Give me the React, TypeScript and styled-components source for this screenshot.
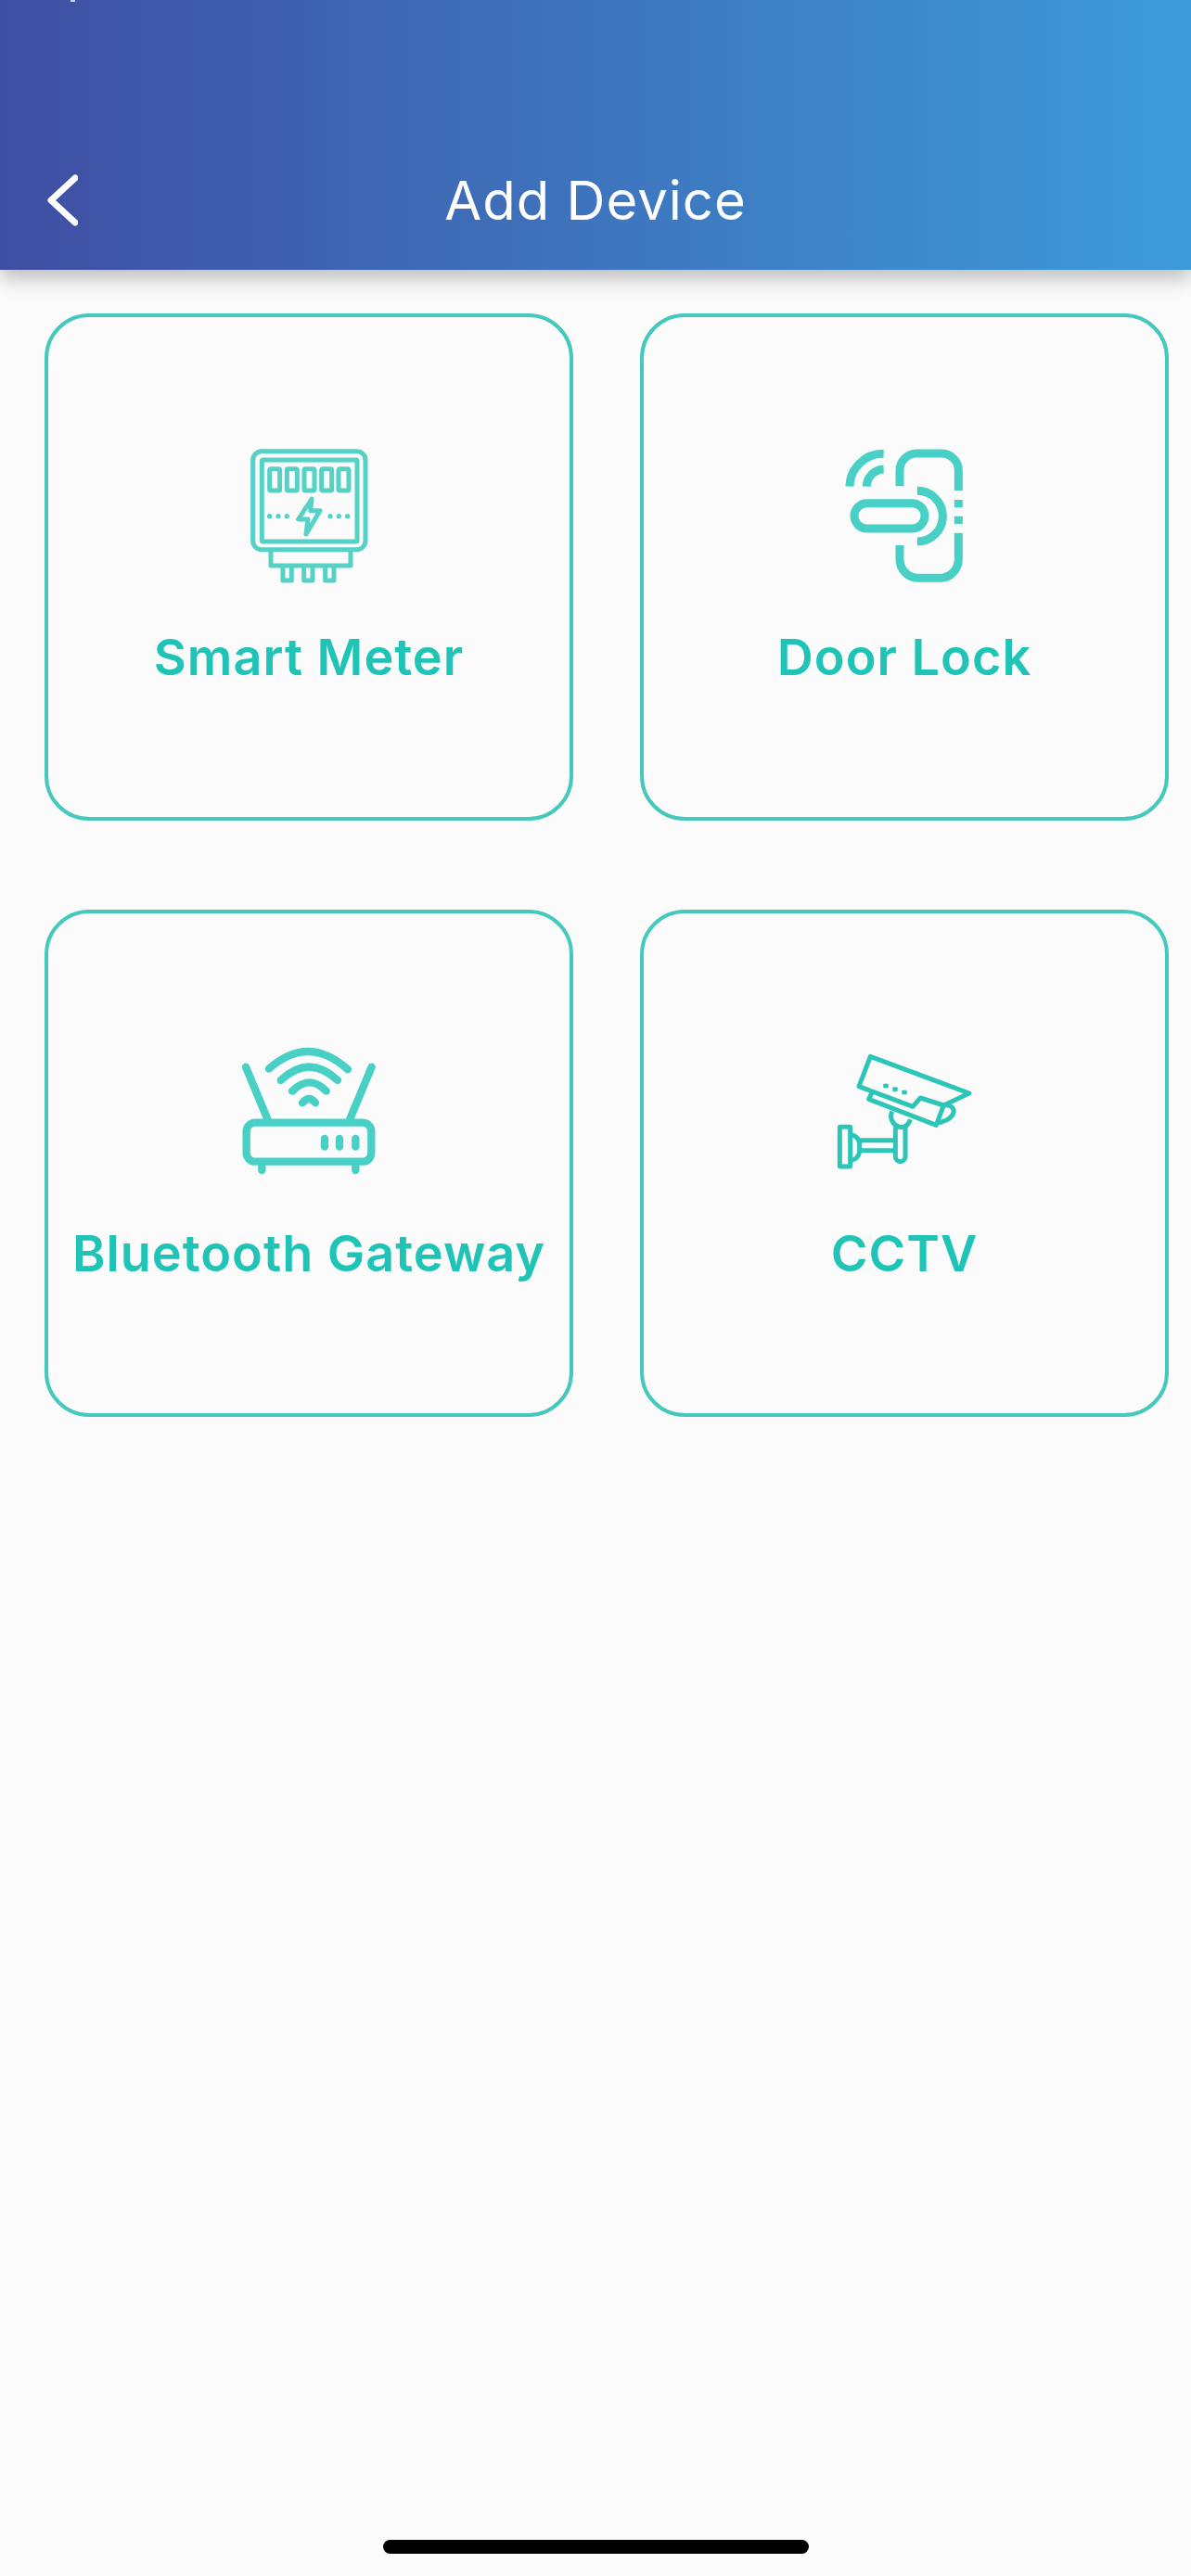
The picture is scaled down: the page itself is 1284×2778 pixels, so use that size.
import styled, { createGlobalStyle } from "styled-components"

const GlobalStyle = createGlobalStyle`
  html, body {
    margin: 0;
    padding: 0;
    background: #fbfbfb;
  }
  * {
    box-sizing: border-box;
  }
`

const Page = styled.div`
  width: 1284px;
  height: 2778px;
  display: flex;
  flex-direction: column;
  background: #fbfbfb;
  font-family: Inter, "Liberation Sans", sans-serif;
`

const Header = styled.header`
  position: relative;
  height: 291px;
  padding: 0 0 47px 0;
  display: grid;
  grid-template-columns: 120px 1fr 120px;
  align-items: end;
  background: linear-gradient(90deg, #3f4ea2 0%, #3d9bd9 100%);
  box-shadow: 0 10px 20px rgba(0, 0, 0, 0.24);
`

// the last bit of the cut off status bar
const StatusSpeck = styled.span`
  position: absolute;
  top: 0;
  left: 76px;
  width: 5px;
  height: 2px;
  background: #c9d2f0;
`

const BackButton = styled.button`
  padding: 0 0 0 50px;
  border: 0;
  background: none;
  display: flex;
  height: 56px;
  align-items: center;
`

const Title = styled.h1`
  margin: 0;
  height: 56px;
  color: #fff;
  font-size: 58px;
  font-weight: 400;
  line-height: 56px;
  letter-spacing: 1px;
  text-align: center;
`

const Grid = styled.main`
  padding: 47px 25px 0 48px;
  display: grid;
  grid-template-columns: 570px 570px;
  grid-auto-rows: 547px;
  column-gap: 72px;
  row-gap: 96px;
`

const Card = styled.button`
  padding: 118px 0 0;
  display: flex;
  flex-direction: column;
  align-items: center;
  border: 4px solid #45c9bd;
  border-radius: 48px;
  background: #fbfbfb;
  font-family: inherit;
`

const Icon = styled.svg`
  display: block;
  width: 200px;
  height: 180px;
  flex: none;
  fill: none;
  stroke-linejoin: round;
`

const Label = styled.span`
  margin-top: 39px;
  color: #1fc4b6;
  font-size: 54px;
  font-weight: 600;
  line-height: 60px;
  letter-spacing: 1px;
  white-space: nowrap;
`

const HomeIndicator = styled.div`
  width: 459px;
  height: 15px;
  margin: auto auto 24px;
  border-radius: 8px;
  background: #000;
`

function MeterIcon() {
  return (
    <Icon viewBox="9 0 600 540" stroke="#55d1c6" strokeWidth="15">
      <rect x="128" y="80" width="364" height="318" rx="28" />
      <rect x="157" y="108" width="308" height="264" rx="4" />
      {[182, 238, 294, 350, 405].map((x) => (
        <rect key={x} x={x} y="137" width="33" height="70" rx="4" />
      ))}
      <path d="M318 234 L275 300 H306 L300 348 L345 272 H314 Z" />
      {[182, 210, 238, 378, 406, 434].map((x) => (
        <circle key={x} cx={x} cy="290" r="8" fill="#55d1c6" stroke="none" />
      ))}
      <path d="M186 400 V450 H444 V400" />
      <path d="M225 452 V498 H253 V452 M293 452 V498 H321 V452 M362 452 V498 H390 V452" />
    </Icon>
  )
}

function DoorLockIcon() {
  return (
    <Icon viewBox="-15 0 600 540" stroke="#48d0c6" strokeWidth="27">
      <path d="M270 193 V142 a55 55 0 0 1 55 -55 H405 a55 55 0 0 1 55 55 V207" />
      <path d="M270 384 V430 a60 60 0 0 0 60 60 H400 a60 60 0 0 0 60 -60 V344" />
      <path d="M460 237 V262 M460 290 V315" />
      <rect x="123" y="248" width="228" height="82" rx="41" />
      <path d="M327 208 A82 82 0 0 1 327 372" />
      <path d="M218 88 A108 108 0 0 0 108 194" />
      <path d="M218 138 A57 57 0 0 0 163 194" />
    </Icon>
  )
}

function GatewayIcon() {
  return (
    <Icon viewBox="9 -21 600 540" stroke="#48d0c6" strokeWidth="25" strokeLinecap="round">
      <path d="M180 128 Q307 15 435 130" />
      <path d="M218 165 Q310 79 402 165" />
      <path d="M255 200 Q312 144 365 200" />
      <path d="M288 238 Q310 212 330 238" />
      <path d="M105 122 L175 290 M512 122 L442 290" />
      <rect x="107" y="302" width="404" height="126" rx="28" />
      <path d="M360 354 V380 M408 354 V380 M460 354 V380" />
      <path d="M157 440 V456 M460 440 V456" />
    </Icon>
  )
}

function CctvIcon() {
  return (
    <Icon viewBox="-15 -21 600 540" stroke="#2cc6b8" strokeWidth="15">
      <path d="M175 88 L495 207 L412 246 L337 222 L312 250 L138 185 Z" />
      <path d="M180 205 L170 226 L388 310 L412 246" />
      <path d="M412 246 C455 240 462 290 392 303" />
      <path d="M245 265 C235 290 250 310 268 316 C290 320 300 305 304 292" />
      <path d="M256 316 V412 a16 16 0 0 0 32 0 V318" />
      <path d="M136 359 H256 M136 392 H256" />
      <rect x="76" y="316" width="34" height="128" rx="2" />
      <path d="M110 340 Q140 346 140 375 V395 Q138 420 110 425" />
      <path d="M218 177 h14 v12 h-14 Z M248 188 h14 v12 h-14 Z M278 198 h14 v12 h-14 Z" fill="#2cc6b8" strokeWidth="2" />
    </Icon>
  )
}

function App() {
  return (
    <Page>
      <GlobalStyle />
      <Header>
        <StatusSpeck />
        <BackButton aria-label="Back">
          <svg width="34" height="56" viewBox="0 0 34 56" fill="none">
            <path d="M31 4 L5 28 L31 52" stroke="#fff" strokeWidth="7" strokeLinecap="round" strokeLinejoin="round" />
          </svg>
        </BackButton>
        <Title>Add Device</Title>
      </Header>

      <Grid>
        <Card>
          <MeterIcon />
          <Label>Smart Meter</Label>
        </Card>
        <Card>
          <DoorLockIcon />
          <Label>Door Lock</Label>
        </Card>
        <Card>
          <GatewayIcon />
          <Label>Bluetooth Gateway</Label>
        </Card>
        <Card>
          <CctvIcon />
          <Label>CCTV</Label>
        </Card>
      </Grid>

      <HomeIndicator />
    </Page>
  )
}

export default App
